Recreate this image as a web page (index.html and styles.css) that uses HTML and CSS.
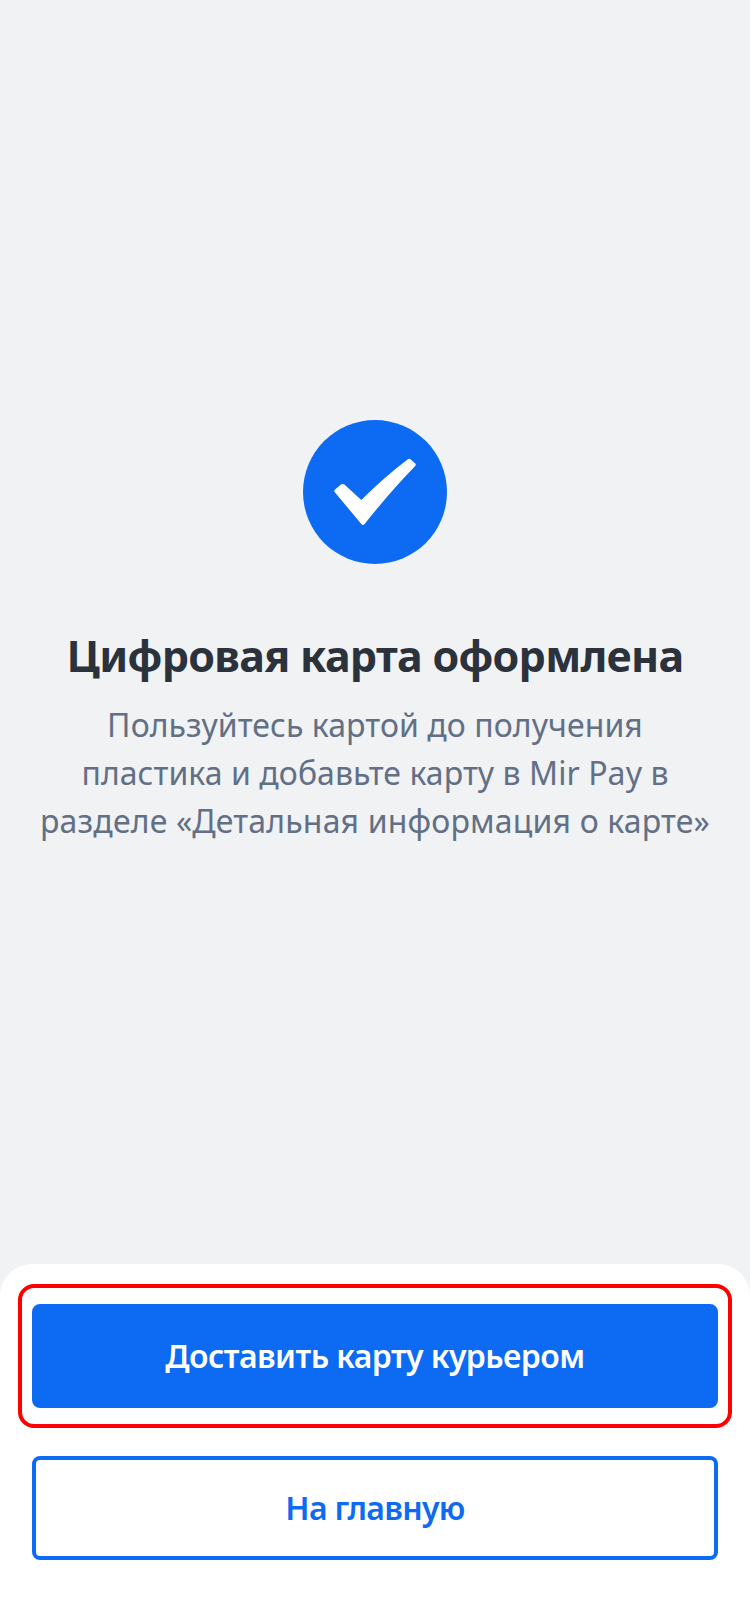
FILE: index.html
```html
<!DOCTYPE html>
<html lang="ru">
<head>
  <meta charset="UTF-8">
  <title>Цифровая карта</title>
  <link rel="stylesheet" href="styles.css">
</head>
<body>
  <div class="screen">
    <main class="result">
      <svg class="result-icon" viewBox="0 0 144 144" aria-hidden="true">
        <circle cx="72" cy="72" r="72" fill="#0d6af2"/>
        <path d="M32 69.6L38 64.6Q39.8 63.2 41.4 64.6L58.3 80Q80 58 104.6 39.4Q106.2 38.2 107.8 39.5L112 43.2Q113.6 44.7 112 46.3Q87 72 61.6 104Q60 106 58.3 104L31.8 72.2Q30.6 70.8 32 69.6Z" fill="#fff"/>
      </svg>
      <h1 class="title">Цифровая карта оформлена</h1>
      <p class="text">Пользуйтесь картой до получения<br>пластика и добавьте карту в Mir Pay в<br><span class="wide">разделе «Детальная информация о карте»</span></p>
    </main>
    <div class="actions">
      <div class="highlight">
        <button class="btn btn-primary">Доставить карту курьером</button>
      </div>
      <button class="btn btn-outline">На главную</button>
    </div>
  </div>
</body>
</html>
```
FILE: styles.css
```css
* { box-sizing: border-box; }
body { margin: 0; background: #f0f2f4; font-family: "Noto Sans", sans-serif; }
.screen { display: flex; flex-direction: column; height: 1624px; }

.result { flex: 1; display: flex; flex-direction: column; align-items: center; padding-top: 420px; text-align: center; }
.result-icon { width: 144px; height: 144px; }
.title { margin: 64px 0 0; font-size: 43px; line-height: 56px; font-weight: 700; letter-spacing: -0.7px; color: #2b323c; white-space: nowrap; }
.text { margin: 17px 0 0; font-size: 32px; line-height: 48px; letter-spacing: 0.07px; color: #626f84; white-space: nowrap; }
.wide { letter-spacing: 0.16px; }

.actions { height: 360px; padding: 20px 18px 0; background: #fff; border-radius: 32px 32px 0 0; }
.highlight { padding: 16px 10px; border: 4px solid #f00; border-radius: 16px; }
.btn { display: block; width: 100%; height: 104px; padding: 0 0 2px; border: 4px solid #0d6af2; border-radius: 8px; font-family: inherit; font-size: 32px; font-weight: 600; letter-spacing: -0.55px; }
.btn-primary { background: #0d6af2; color: #fff; }
.btn-outline { width: 686px; margin: 28px 14px 0; background: #fff; color: #0d6af2; letter-spacing: -0.7px; }
```
